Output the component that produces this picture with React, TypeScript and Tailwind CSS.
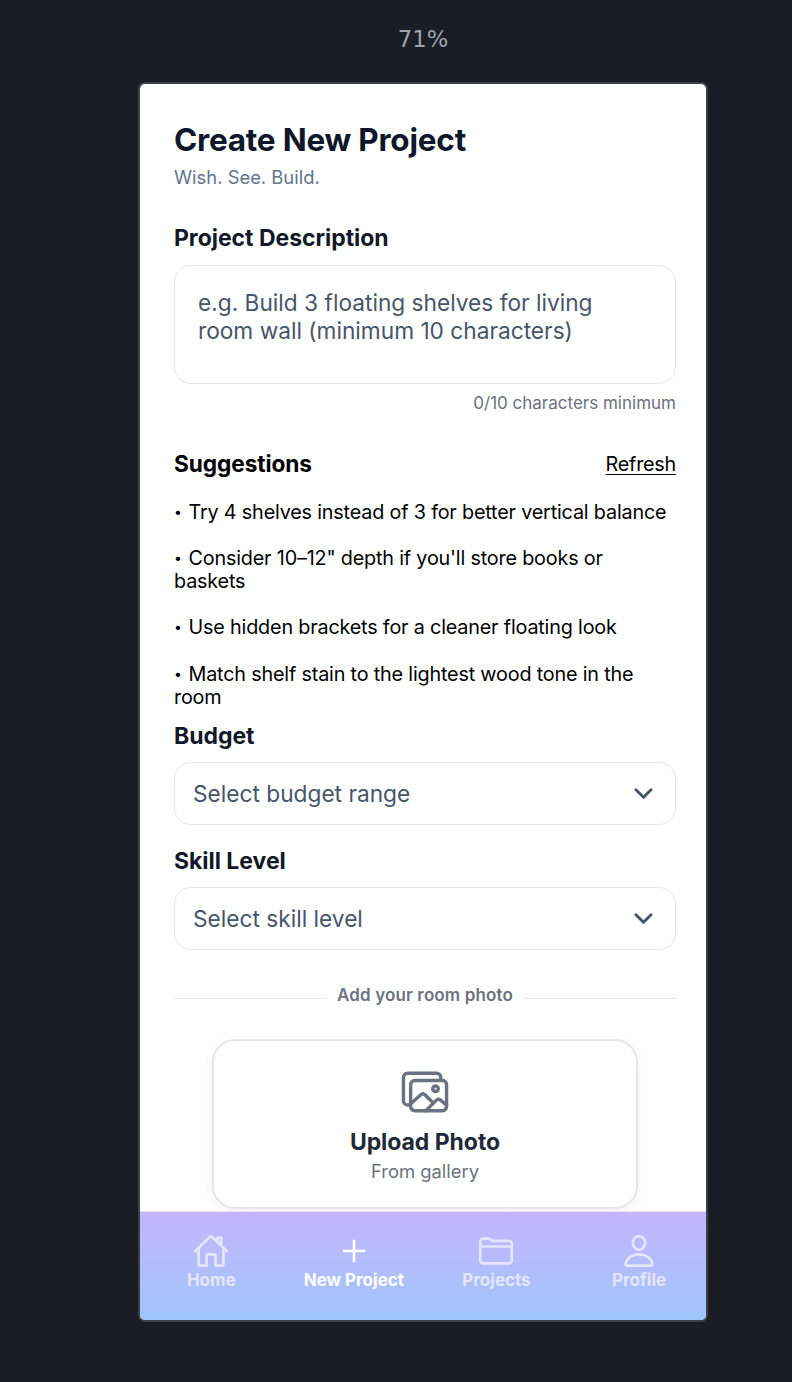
import {
  IoAddOutline,
  IoChevronDown,
  IoFolderOutline,
  IoHomeOutline,
  IoImagesOutline,
  IoPersonOutline,
} from "react-icons/io5";

const suggestions = [
  "Try 4 shelves instead of 3 for better vertical balance",
  "Consider 10–12\" depth if you'll store books or baskets",
  "Use hidden brackets for a cleaner floating look",
  "Match shelf stain to the lightest wood tone in the room",
];

const tabs = [
  { label: "Home", icon: IoHomeOutline, active: false },
  { label: "New Project", icon: IoAddOutline, active: true },
  { label: "Projects", icon: IoFolderOutline, active: false },
  { label: "Profile", icon: IoPersonOutline, active: false },
];

function Label({ children }: { children: string }) {
  return (
    <h2 className="h-8 text-[23px] leading-8 font-[650] tracking-[-0.03px] whitespace-nowrap text-[#111827]">
      {children}
    </h2>
  );
}

function Select({ placeholder }: { placeholder: string }) {
  return (
    <button className="mt-[10px] flex h-[63px] w-full items-center justify-between rounded-[17px] border-[1.5px] border-[#e5e7eb] bg-white pt-[2px] pr-[18px] pl-[18px] text-[22.7px] text-[#475569]">
      <span>{placeholder}</span>
      <IoChevronDown className="size-[27px] -translate-y-px [&_*]:[stroke-width:56px]" />
    </button>
  );
}

export default function App() {
  return (
    <div className="flex h-[1382px] w-[792px] flex-col overflow-hidden bg-[#1a1d25] pl-[138px] font-['Inter','Liberation_Sans',sans-serif]">
      <div className="flex h-[82px] w-[570px] shrink-0 items-center justify-center pb-[4px] font-['DejaVu_Sans',sans-serif] text-[22.7px] text-[#a0a3aa]">
        71%
      </div>
      <main className="flex h-[1240px] w-[570px] shrink-0 flex-col overflow-hidden rounded-[7px] border-2 border-[#3d4049] bg-white">
        <div className="flex h-[1127px] shrink-0 flex-col overflow-hidden pt-[34px] pr-[30px] pl-[34px]">
          <h1 className="h-[44px] text-[31.5px] leading-[44px] font-[650] tracking-[-0.22px] text-[#0f172a]">
            Create New Project
          </h1>
          <p className="mt-[2px] h-[26px] text-[18.4px] leading-[26px] text-[#64748b]">Wish. See. Build.</p>

          <div className="mt-[32px]">
            <Label>Project Description</Label>
          </div>
          <div className="mt-[11px] h-[119px] shrink-0 rounded-[17px] border-[1.5px] border-[#e5e7eb] px-[23px] pt-[23px] text-[22.7px] leading-[28px] text-[#475569]">
            e.g. Build 3 floating shelves for living room wall (minimum 10 characters)
          </div>
          <p className="mt-[7px] text-right text-[17px] leading-6 text-[#6b7280]">0/10 characters minimum</p>

          <div className="mt-[33px] flex h-8 items-center justify-between text-black">
            <h2 className="text-[22.7px] font-bold tracking-[-0.1px]">Suggestions</h2>
            <button className="pt-px text-[19.8px] tracking-[-0.24px] underline underline-offset-[3px]">
              Refresh
            </button>
          </div>
          <ul className="mt-[20.5px] flex flex-col gap-[23.15px] text-[19.8px] leading-[23.15px] tracking-[-0.18px] text-black">
            {suggestions.map((text) => (
              <li key={text}>
                <span className="inline-block w-[14.5px] -translate-y-[2px] text-[14px] leading-none">•</span>
                {text}
              </li>
            ))}
          </ul>

          <div className="mt-[11px]">
            <Label>Budget</Label>
            <Select placeholder="Select budget range" />
          </div>
          <div className="mt-[20px]">
            <Label>Skill Level</Label>
            <Select placeholder="Select skill level" />
          </div>

          <div className="mt-[33px] flex h-6 items-center gap-[11px]">
            <span className="mt-[7px] h-[1.5px] flex-1 bg-[#e5e7eb]" />
            <span className="text-[17px] leading-6 font-semibold tracking-[0.14px] text-[#6b7280]">
              Add your room photo
            </span>
            <span className="mt-[7px] h-[1.5px] flex-1 bg-[#e5e7eb]" />
          </div>

          <button className="mt-[32px] ml-[38px] flex h-[170px] w-[426px] shrink-0 flex-col items-center rounded-[23px] border-2 border-[#e5e7eb] bg-white pt-[28px] shadow-[0_3px_12px_rgba(0,0,0,0.05)]">
            <IoImagesOutline className="size-[46px] overflow-visible text-[#6b7280] [&_*]:[stroke-width:38px]" />
            <span className="mt-[11px] text-[23px] leading-8 font-[650] tracking-[-0.05px] text-[#1f2937]">
              Upload Photo
            </span>
            <span className="text-[18.4px] leading-[26px] text-[#6b7280]">From gallery</span>
          </button>
        </div>
        <nav className="grid h-[109px] shrink-0 grid-cols-[repeat(4,142.6px)] border-t border-[#e5e7eb] bg-linear-to-b from-[#c4b5fd] to-[#9fc5fa] pt-[20.5px]">
          {tabs.map(({ label, icon: Icon, active }) => (
            <div
              key={label}
              className={
                active
                  ? "flex flex-col items-center text-white"
                  : "flex flex-col items-center text-[#e4e7fd]"
              }
            >
              <Icon className="size-[36px] overflow-visible [&_*]:[stroke-width:38px]" />
              <span className="-mt-[0.5px] text-[17px] leading-6 font-bold whitespace-nowrap">{label}</span>
            </div>
          ))}
        </nav>
      </main>
    </div>
  );
}
